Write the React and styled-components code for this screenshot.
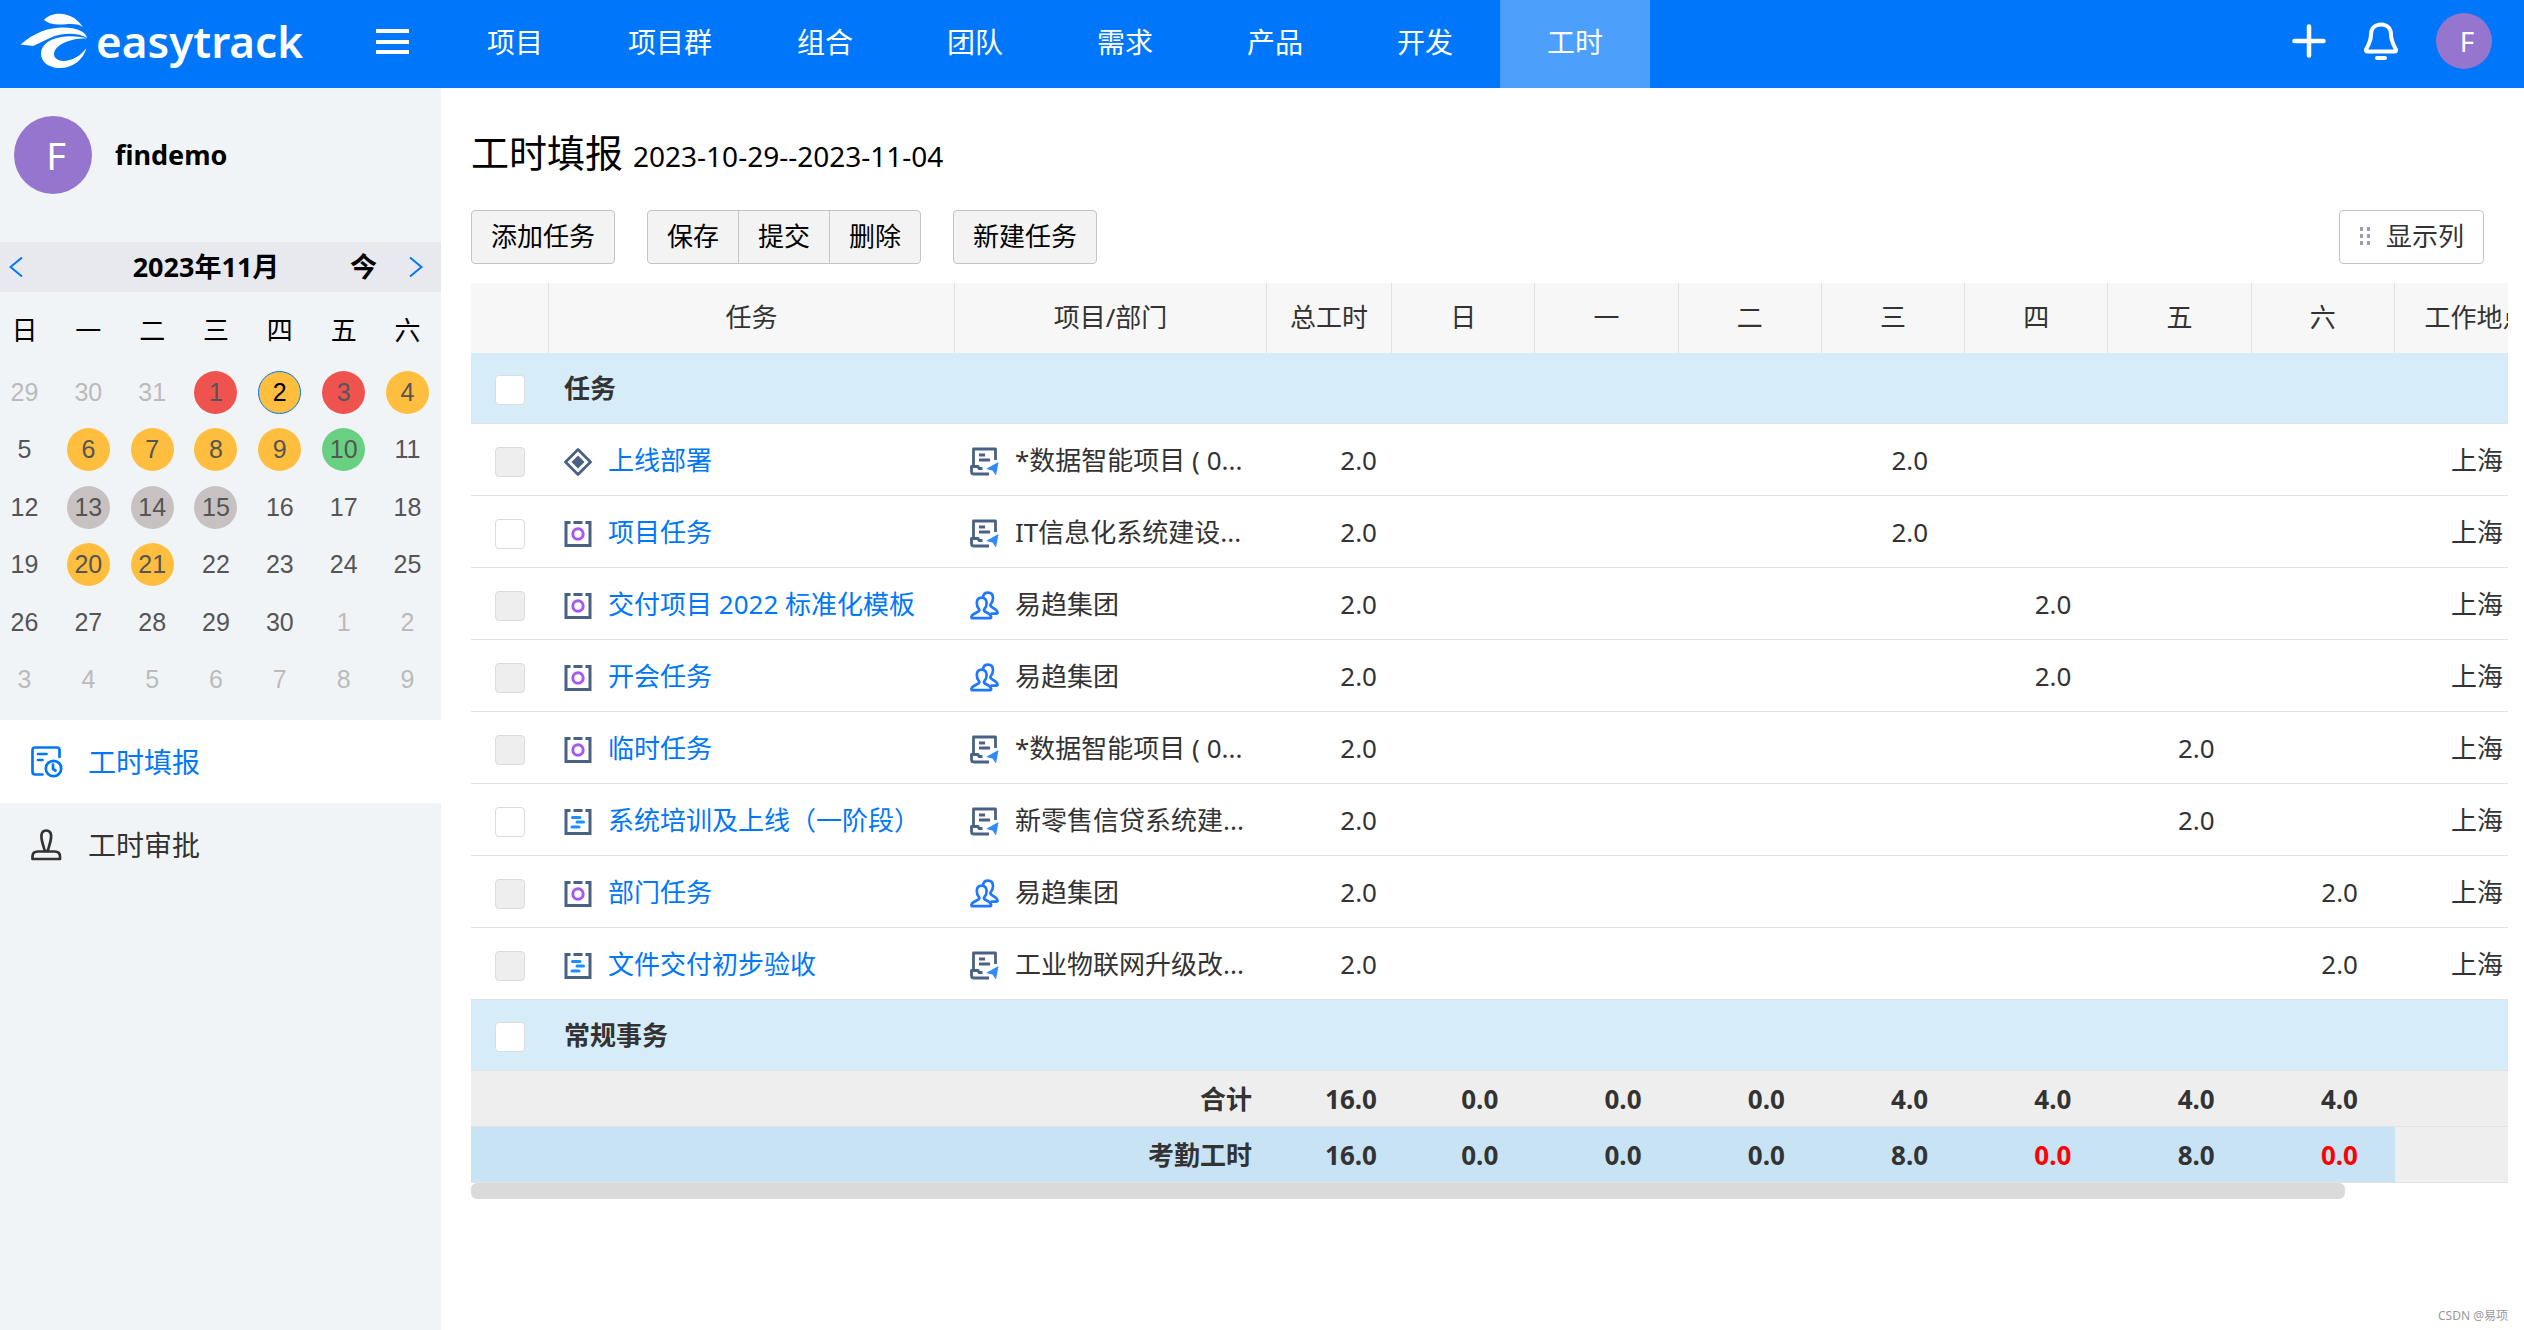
import styled, { createGlobalStyle } from "styled-components";

const GlobalStyle = createGlobalStyle`
  * {
    box-sizing: border-box;
  }
  body {
    margin: 0;
    background: #fff;
    color: #333;
    font-family: "Noto Sans", "Noto Sans CJK SC", sans-serif;
    font-size: 26px;
    line-height: 36px;
  }
  button {
    font: inherit;
    color: inherit;
    background: none;
    border: 0;
    padding: 0;
    cursor: pointer;
  }
  a {
    text-decoration: none;
  }
  svg {
    display: block;
    flex: none;
  }
`;

const Page = styled.div`
  min-height: 100vh;
  display: flex;
  flex-direction: column;
  position: relative;
`;

/* header */

const Header = styled.header`
  height: 88px;
  display: flex;
  align-items: center;
  background: #0077fa;
  color: #fff;
`;

const Brand = styled.a`
  width: 376px;
  padding: 0 0 6px 20px;
  display: flex;
  align-items: center;
  gap: 8px;
  color: #fff;
  font-size: 44px;
  font-weight: 600;
  line-height: 60px;
`;

const MenuButton = styled.button`
  width: 64px;
  height: 88px;
  padding-bottom: 4px;
  display: flex;
  align-items: center;
`;

const Nav = styled.nav`
  flex: 1;
  display: flex;
  align-self: stretch;
`;

const NavLink = styled.a`
  min-width: 150px;
  padding: 0 38px 4px;
  display: flex;
  align-items: center;
  justify-content: center;
  color: #fff;
  font-size: 28px;
  background: ${(props) => (props.$active ? "#4d9ffc" : "transparent")};
`;

const HeaderActions = styled.div`
  display: flex;
  align-items: center;
  gap: 37px;
  padding: 0 32px 6px 0;
`;

const Avatar = styled.span`
  width: ${(props) => props.$size}px;
  height: ${(props) => props.$size}px;
  padding-left: 6px;
  display: flex;
  align-items: center;
  justify-content: center;
  border-radius: 50%;
  background: #9575cd;
  color: #fff;
  font-size: ${(props) => (props.$size > 60 ? 38 : 28)}px;
  font-weight: 400;
`;

/* sidebar */

const Body = styled.div`
  flex: 1;
  display: flex;
`;

const Sidebar = styled.aside`
  width: 441px;
  flex: none;
  background: #f0f4f7;
`;

const UserBox = styled.div`
  display: flex;
  align-items: center;
  gap: 23px;
  padding: 28px 14px 48px;
  color: #000;
  font-size: 27px;
  font-weight: 700;
`;

const CalendarHead = styled.div`
  height: 50px;
  display: grid;
  grid-template-columns: 62px 1fr 26px 65px;
  align-items: center;
  background: #e8e9ee;
  color: #000;
  font-size: 27px;
  font-weight: 700;
  text-align: center;
`;

const ArrowButton = styled.button`
  display: flex;
  justify-content: ${(props) => (props.$end ? "flex-end" : "flex-start")};
  padding: 0 18px 0 9px;
`;

const CalendarGrid = styled.div`
  display: grid;
  grid-template-columns: repeat(7, 43px);
  grid-auto-rows: 43px;
  justify-content: space-between;
  align-content: space-between;
  align-items: center;
  text-align: center;
  padding: 0 12px 0 3px;
`;

const Weekdays = styled(CalendarGrid)`
  padding-top: 16px;
  color: #000;
`;

const Days = styled(CalendarGrid)`
  height: 330px;
  margin: 20px 0 19px;
`;

const dayColors = {
  late: "#ef5350",
  partial: "#ffbe3d",
  full: "#68d181",
  rest: "#c7c2c1",
};

const Day = styled.button`
  height: 43px;
  border-radius: 50%;
  font-family: "Liberation Sans", Arial, sans-serif;
  font-size: 25px;
  line-height: 41px;
  border: 1px solid ${(props) => (props.$today ? "#0077fa" : "transparent")};
  background: ${(props) => dayColors[props.$status] || "transparent"};
  color: ${(props) =>
    props.$today ? "#000" : props.$outside ? "#bbb" : "#555"};
`;

const SideLink = styled.a`
  height: 83px;
  padding-left: 31px;
  display: flex;
  align-items: center;
  gap: 25px;
  font-size: 28px;
  color: ${(props) => (props.$active ? "#0077fa" : "#333")};
  background: ${(props) => (props.$active ? "#fff" : "transparent")};
`;

/* main */

const Main = styled.main`
  flex: 1;
  min-width: 0;
  padding: 38px 16px 0 30px;
`;

const Title = styled.h1`
  margin: 0 0 32px;
  display: flex;
  align-items: baseline;
  gap: 10px;
  color: #000;
  font-size: 38px;
  font-weight: 400;
  line-height: 52px;

  small {
    font-size: 28px;
    line-height: 36px;
  }
`;

const Toolbar = styled.div`
  display: flex;
  gap: 32px;
  margin-bottom: 19px;
`;

const Button = styled.button`
  height: 54px;
  padding: 0 19px 2px;
  border: 1px solid #c4c4c4;
  border-radius: 4px;
  background: #f3f3f3;
  color: #000;
`;

const ButtonGroup = styled.div`
  display: flex;

  ${Button} + ${Button} {
    margin-left: -1px;
  }
  ${Button}:not(:first-child) {
    border-top-left-radius: 0;
    border-bottom-left-radius: 0;
  }
  ${Button}:not(:last-child) {
    border-top-right-radius: 0;
    border-bottom-right-radius: 0;
  }
`;

const ColumnsButton = styled(Button)`
  margin-left: auto;
  margin-right: 24px;
  display: flex;
  align-items: center;
  gap: 15px;
  background: #fff;
  color: #333;
`;

const TableScroll = styled.div`
  overflow-x: auto;
  scrollbar-width: none;
`;

const Table = styled.table`
  width: 2088px;
  table-layout: fixed;
  border-collapse: separate;
  border-spacing: 0;
`;

const HeadCell = styled.th`
  height: 70px;
  padding: 0 0 2px;
  border-right: 1px solid #e2e2e2;
  background: #f7f7f7;
  font-weight: 400;
  text-align: center;
`;

const Cell = styled.td`
  height: 72px;
  padding: 0 0 0 15px;
  border-bottom: 1px solid #e2e2e5;
  white-space: nowrap;
`;

const CheckCell = styled(Cell)`
  padding: 4px 0 0 24px;
`;

const NumberCell = styled(Cell)`
  padding: 0 ${(props) => (props.$total ? 15 : 37)}px 0 0;
  text-align: right;
`;

const PlaceCell = styled(Cell)`
  padding: 0;
  text-align: center;
`;

const GroupRow = styled.tr`
  background: #d7ecf9;
  font-weight: 700;

  ${Cell} {
    height: 71px;
  }
`;

const SumRow = styled.tr`
  background: ${(props) => (props.$attendance ? "#c8e3f4" : "#eee")};
  font-weight: 700;

  ${Cell} {
    height: 56px;
  }
  ${Cell}:last-child {
    background: #eee;
  }
`;

const SumLabel = styled(Cell)`
  padding: 0 15px 0 0;
  text-align: right;
`;

const Alert = styled.span`
  color: #f00;
`;

const Checkbox = styled.input.attrs({ type: "checkbox" })`
  appearance: none;
  display: block;
  width: 30px;
  height: 30px;
  margin: 0;
  border: 1px solid #dcdcdc;
  border-radius: 4px;
  background: #fff;

  &:disabled {
    background: #eee;
  }
`;

const WithIcon = styled.div`
  display: flex;
  align-items: center;
  gap: 16px;

  svg {
    margin-top: 4px;
  }
`;

const TaskLink = styled.a`
  color: #0077fa;
`;

const ScrollTrack = styled.div`
  height: 16px;
`;

const ScrollThumb = styled.div`
  width: 92%;
  height: 100%;
  border-radius: 6px;
  background: #dadada;
`;

const Watermark = styled.span`
  position: absolute;
  right: 16px;
  bottom: 4px;
  font-size: 12px;
  line-height: 20px;
  color: #999;
`;

/* icons */

const slate = "#4a6186";

const LogoMark = () => (
  <svg width="68" height="56" viewBox="19 13 68 56" fill="#fff">
    <path d="M43 20C49 12 70 9 82 27C74 22 66 25 56 24.500Q48 24 43 20Z" />
    <path d="M19.500 44.500C34 32 48 27.500 62 27.500C76 27.500 85 32 86 38C78 33 62 32 49 38C43 41 38 43 32 46Z" />
    <path d="M86 38.500C70 38 54 44 53 54C53 64 74 64 85.500 48C82 60 72 68 59 68C46 68 38 60 40.500 50C44 38 66 33 86 38.500Z" />
  </svg>
);

const MenuIcon = () => (
  <svg width="33" height="26" viewBox="0 0 33 26" fill="#fff">
    <path d="M0 0h33v4H0zM0 11h33v4H0zM0 21h33v4H0z" />
  </svg>
);

const PlusIcon = () => (
  <svg
    width="34"
    height="34"
    viewBox="0 0 34 34"
    stroke="#fff"
    strokeWidth="4.500"
    strokeLinecap="round"
  >
    <path d="M17 2.500V31.500M2.500 17H31.500" />
  </svg>
);

const BellIcon = () => (
  <svg
    width="36"
    height="38"
    viewBox="0 0 36 38"
    fill="none"
    stroke="#fff"
    strokeWidth="4"
    strokeLinecap="round"
    strokeLinejoin="round"
  >
    <path d="M18 2.500C11.500 2.500 8 7 8 12.500C8 19 6 22 3 27.500Q2.500 29.500 4.500 29.500H31.500Q33.500 29.500 33 27.500C30 22 28 19 28 12.500C28 7 24.500 2.500 18 2.500ZM14 36H22" />
  </svg>
);

const Chevron = ({ right }) => (
  <svg
    width="14"
    height="22"
    viewBox="0 0 14 22"
    fill="none"
    stroke="#0077fa"
    strokeWidth="2"
  >
    <path d={right ? "M1 1.500L12.500 11L1 20.500" : "M13 1.500L1.500 11L13 20.500"} />
  </svg>
);

const ReportIcon = () => (
  <svg
    width="32"
    height="32"
    viewBox="0 0 32 32"
    fill="none"
    stroke="currentColor"
    strokeWidth="2.700"
    strokeLinecap="round"
    strokeLinejoin="round"
  >
    <path d="M28.500 11V4Q28.500 1.500 26 1.500H4Q1.500 1.500 1.500 4V25.500Q1.500 28.500 4 28.500H11.500M7 8H15.500M7 14H11.500" />
    <circle cx="22.500" cy="22.500" r="7.700" />
    <path d="M22 18.500V23L24.500 24.500" />
  </svg>
);

const StampIcon = () => (
  <svg
    width="32"
    height="32"
    viewBox="0 0 32 32"
    fill="none"
    stroke="currentColor"
    strokeWidth="2.700"
    strokeLinejoin="round"
  >
    <path d="M15.200 1.500C11 1.500 10 5 10.500 9C11 14 12.500 17 13.800 22H16.800C18 17 19.500 14 20 9C20.500 5 19.500 1.500 15.200 1.500Z" />
    <path d="M1.500 30V27.500Q1.500 22.500 7 22.500H23.500Q29 22.500 29 27.500V30Z" />
  </svg>
);

const DotsIcon = () => (
  <svg width="12" height="18" viewBox="0 0 12 18" fill="#9a9db0">
    <path d="M1 0h3v4H1zM8 0h3v4H8zM1 7h3v4H1zM8 7h3v4H8zM1 14h3v4H1zM8 14h3v4H8z" />
  </svg>
);

const ReleaseIcon = () => (
  <svg width="28" height="28" viewBox="0 0 28 28">
    <path
      d="M14 1.500L26.500 14L14 26.500L1.500 14Z"
      fill="none"
      stroke={slate}
      strokeWidth="2.800"
      strokeLinejoin="round"
    />
    <path d="M14 7.500L20.500 14L14 20.500L7.500 14Z" fill={slate} />
  </svg>
);

const TaskFrame = ({ children }) => (
  <svg width="28" height="28" viewBox="0 0 28 28" fill="none" strokeWidth="3">
    <path
      d="M6.500 2.500H2V25.500H26V2.500H21.500M9.500 2.500H18.500"
      stroke={slate}
    />
    {children}
  </svg>
);

const TaskIcon = () => (
  <TaskFrame>
    <circle cx="14" cy="14" r="5.200" stroke="#a25bee" />
  </TaskFrame>
);

const MilestoneIcon = () => (
  <TaskFrame>
    <path
      d="M8.500 9.500H16M13 14H19.500M8 19H15"
      stroke="#1890ff"
      strokeLinecap="round"
    />
  </TaskFrame>
);

const ProjectIcon = () => (
  <svg
    width="29"
    height="29"
    viewBox="0 0 29 29"
    fill="none"
    stroke={slate}
    strokeWidth="2.800"
    strokeLinejoin="round"
  >
    <path d="M3.500 18V2H25.500V13M9 8H15M9 13H20" />
    <path d="M12.500 21.500H9L8 19.500H1.500V24.500Q1.500 27 4 27H19" />
    <path d="M28.500 15L16 22L22.500 23.500L26 28.500Z" fill="#2f88ff" stroke="none" />
  </svg>
);

const TeamIcon = () => (
  <svg
    width="29"
    height="29"
    viewBox="0 0 29 29"
    fill="none"
    stroke="#1f78ff"
    strokeWidth="2.700"
    strokeLinejoin="round"
  >
    <path d="M2.500 27.200H20Q21.500 27.200 21 25.500Q20.500 23.500 18.500 22.500L14.500 20.300Q13.500 19.300 14.600 17.800Q16.600 15.500 16.600 12C16.600 8.500 14.500 6.600 11.700 6.600C8.800 6.600 6.800 8.500 6.800 12Q6.800 15.500 8.800 17.800Q9.900 19.300 8.800 20.300L3.800 23Q1.400 24.500 1.400 26Q1.400 27.200 2.500 27.200Z" />
    <path d="M13 6C13.500 3 15.500 1.700 18 1.700C21 1.700 23 3.700 23 7.200Q22.800 10.500 21 12.800Q19.800 14.500 21.200 15.600L25.300 18.300Q27.600 20 27.600 21.600Q27.500 22.600 26.300 22.600H20.500" />
  </svg>
);

const taskIcons = {
  release: ReleaseIcon,
  task: TaskIcon,
  milestone: MilestoneIcon,
};

/* data */

const navItems = [
  "项目",
  "项目群",
  "组合",
  "团队",
  "需求",
  "产品",
  "开发",
  "工时",
];

const weekdays = ["日", "一", "二", "三", "四", "五", "六"];

const dayStatus = {
  1: "late",
  2: "partial",
  3: "late",
  4: "partial",
  6: "partial",
  7: "partial",
  8: "partial",
  9: "partial",
  10: "full",
  13: "rest",
  14: "rest",
  15: "rest",
  20: "partial",
  21: "partial",
};

// 42 cells, starting on Sunday 2023-10-29
const calendarDays = Array.from({ length: 42 }, (_, index) => {
  const date = new Date(2023, 9, 29 + index);
  return { day: date.getDate(), outside: date.getMonth() !== 10 };
});

const tasks = [
  {
    icon: "release",
    name: "上线部署",
    project: "*数据智能项目 ( 0...",
    day: 3,
    locked: true,
  },
  {
    icon: "task",
    name: "项目任务",
    project: "IT信息化系统建设...",
    day: 3,
  },
  {
    icon: "task",
    name: "交付项目 2022 标准化模板",
    project: "易趋集团",
    team: true,
    day: 4,
    locked: true,
  },
  {
    icon: "task",
    name: "开会任务",
    project: "易趋集团",
    team: true,
    day: 4,
    locked: true,
  },
  {
    icon: "task",
    name: "临时任务",
    project: "*数据智能项目 ( 0...",
    day: 5,
    locked: true,
  },
  {
    icon: "milestone",
    name: "系统培训及上线（一阶段）",
    project: "新零售信贷系统建...",
    day: 5,
  },
  {
    icon: "task",
    name: "部门任务",
    project: "易趋集团",
    team: true,
    day: 6,
    locked: true,
  },
  {
    icon: "milestone",
    name: "文件交付初步验收",
    project: "工业物联网升级改...",
    day: 6,
    locked: true,
  },
];

const totals = ["0.0", "0.0", "0.0", "4.0", "4.0", "4.0", "4.0"];
const attendance = ["0.0", "0.0", "0.0", "8.0", "0.0", "8.0", "0.0"];

function Calendar() {
  return (
    <section>
      <CalendarHead>
        <ArrowButton aria-label="上个月">
          <Chevron />
        </ArrowButton>
        <span>2023年11月</span>
        <button>今</button>
        <ArrowButton $end aria-label="下个月">
          <Chevron right />
        </ArrowButton>
      </CalendarHead>
      <Weekdays>
        {weekdays.map((weekday) => (
          <span key={weekday}>{weekday}</span>
        ))}
      </Weekdays>
      <Days>
        {calendarDays.map(({ day, outside }, index) => (
          <Day
            key={index}
            $outside={outside}
            $today={!outside && day === 2}
            $status={outside ? undefined : dayStatus[day]}
          >
            {day}
          </Day>
        ))}
      </Days>
    </section>
  );
}

function Group({ name }) {
  return (
    <GroupRow>
      <CheckCell>
        <Checkbox aria-label={name} />
      </CheckCell>
      <Cell colSpan={11}>{name}</Cell>
    </GroupRow>
  );
}

function TaskRow({ task }) {
  const Icon = taskIcons[task.icon];
  return (
    <tr>
      <CheckCell>
        <Checkbox aria-label={task.name} disabled={task.locked} />
      </CheckCell>
      <Cell>
        <WithIcon>
          <Icon />
          <TaskLink href="#">{task.name}</TaskLink>
        </WithIcon>
      </Cell>
      <Cell>
        <WithIcon>
          {task.team ? <TeamIcon /> : <ProjectIcon />}
          <span>{task.project}</span>
        </WithIcon>
      </Cell>
      <NumberCell $total>2.0</NumberCell>
      {weekdays.map((weekday, index) => (
        <NumberCell key={weekday}>{index === task.day ? "2.0" : ""}</NumberCell>
      ))}
      <PlaceCell>上海</PlaceCell>
    </tr>
  );
}

function Timesheet() {
  return (
    <TableScroll>
      <Table>
        <colgroup>
          <col width="78" />
          <col width="406" />
          <col width="312" />
          <col width="125" />
          {weekdays.map((weekday) => (
            <col key={weekday} />
          ))}
          <col width="164" />
        </colgroup>
        <thead>
          <tr>
            <HeadCell />
            <HeadCell>任务</HeadCell>
            <HeadCell>项目/部门</HeadCell>
            <HeadCell>总工时</HeadCell>
            {weekdays.map((weekday) => (
              <HeadCell key={weekday}>{weekday}</HeadCell>
            ))}
            <HeadCell>工作地点</HeadCell>
          </tr>
        </thead>
        <tbody>
          <Group name="任务" />
          {tasks.map((task) => (
            <TaskRow key={task.name} task={task} />
          ))}
          <Group name="常规事务" />
        </tbody>
        <tfoot>
          <SumRow>
            <SumLabel colSpan={3}>合计</SumLabel>
            <NumberCell $total>16.0</NumberCell>
            {totals.map((hours, index) => (
              <NumberCell key={index}>{hours}</NumberCell>
            ))}
            <Cell />
          </SumRow>
          <SumRow $attendance>
            <SumLabel colSpan={3}>考勤工时</SumLabel>
            <NumberCell $total>16.0</NumberCell>
            {attendance.map((hours, index) => (
              <NumberCell key={index}>
                {Number(hours) < Number(totals[index]) ? (
                  <Alert>{hours}</Alert>
                ) : (
                  hours
                )}
              </NumberCell>
            ))}
            <Cell />
          </SumRow>
        </tfoot>
      </Table>
    </TableScroll>
  );
}

export default function App() {
  return (
    <Page>
      <GlobalStyle />
      <Header>
        <Brand href="#">
          <LogoMark />
          easytrack
        </Brand>
        <MenuButton aria-label="菜单">
          <MenuIcon />
        </MenuButton>
        <Nav>
          {navItems.map((item) => (
            <NavLink key={item} href="#" $active={item === "工时"}>
              {item}
            </NavLink>
          ))}
        </Nav>
        <HeaderActions>
          <button aria-label="新建">
            <PlusIcon />
          </button>
          <button aria-label="通知">
            <BellIcon />
          </button>
          <Avatar $size={56}>F</Avatar>
        </HeaderActions>
      </Header>
      <Body>
        <Sidebar>
          <UserBox>
            <Avatar $size={78}>F</Avatar>
            findemo
          </UserBox>
          <Calendar />
          <SideLink href="#" $active>
            <ReportIcon />
            工时填报
          </SideLink>
          <SideLink href="#">
            <StampIcon />
            工时审批
          </SideLink>
        </Sidebar>
        <Main>
          <Title>
            工时填报 <small>2023-10-29--2023-11-04</small>
          </Title>
          <Toolbar>
            <Button>添加任务</Button>
            <ButtonGroup>
              <Button>保存</Button>
              <Button>提交</Button>
              <Button>删除</Button>
            </ButtonGroup>
            <Button>新建任务</Button>
            <ColumnsButton>
              <DotsIcon />
              显示列
            </ColumnsButton>
          </Toolbar>
          <Timesheet />
          <ScrollTrack>
            <ScrollThumb />
          </ScrollTrack>
        </Main>
      </Body>
      <Watermark>CSDN @易项</Watermark>
    </Page>
  );
}
